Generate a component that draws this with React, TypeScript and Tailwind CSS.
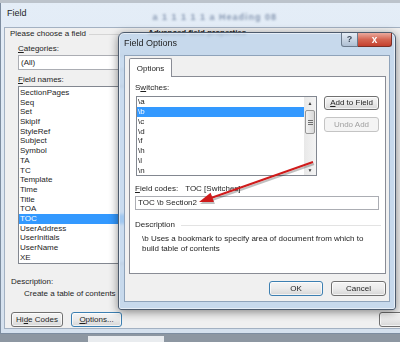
import React from 'react';

const fieldNames = [
  'SectionPages',
  'Seq',
  'Set',
  'SkipIf',
  'StyleRef',
  'Subject',
  'Symbol',
  'TA',
  'TC',
  'Template',
  'Time',
  'Title',
  'TOA',
  'TOC',
  'UserAddress',
  'UserInitials',
  'UserName',
  'XE',
];

const switches = ['\\a', '\\b', '\\c', '\\d', '\\f', '\\h', '\\l', '\\n'];

const btn =
  'flex items-center justify-center rounded-[3px] border bg-linear-to-b from-[#f4f4f4] via-[#ebebeb] to-[#d6d6d6] shadow-[inset_0_0_0_1px_rgba(255,255,255,0.7)]';

const App = () => {
  return (
    <div className="relative flex h-[342px] w-[400px] flex-col overflow-hidden bg-[#8d97a2] font-['Liberation_Sans',Arial,sans-serif] text-[8px] leading-[10px] text-[#1e1e1e]">
      <div className="h-[3px] bg-[#bcc3cb]" />

      {/* Field dialog (behind) */}
      <div className="flex h-[331px] w-[432px] flex-col border-l border-b border-[#7d8da0] bg-linear-to-b from-[#e4edf7] to-[#d5e1ee] pl-[3px]">
        <div className="flex h-[24px] items-start">
          <span className="pt-[5px] pl-[3px] text-[9px]">Field</span>
          <span className="mt-[9px] ml-[126px] text-[9px] font-bold tracking-[1px] text-[#8798b2] blur-[0.8px]">
            a 1 1 1 1 1 a Heading 08
          </span>
        </div>
        <div className="flex h-[302px] w-[428px] flex-col border border-[#a3b1c2] bg-[#f0f0f0]">
          <div className="flex">
            <div className="flex w-[143px] flex-col">
              <div className="mt-[1px] flex items-center pl-[5px]">
                <span>Please choose a field</span>
                <div className="mr-[4px] ml-[3px] h-px flex-1 bg-[#d5d5d5]" />
              </div>
              <div className="mt-[5px] pl-[13px]">
                <u>C</u>ategories:
              </div>
              <div className="mt-[1px] ml-[13px] flex h-[15px] w-[130px] items-center border border-[#abadb3] bg-white pl-[2px]">
                (All)
              </div>
              <div className="mt-[5px] pl-[13px]">
                <u>F</u>ield names:
              </div>
              <div className="mt-[1px] ml-[13px] flex h-[178px] w-[130px] flex-col border border-[#828790] bg-white pt-[1px]">
                {fieldNames.map((n) => (
                  <div
                    key={n}
                    className={
                      n === 'TOC'
                        ? 'h-[9.7px] bg-[#3399ff] pl-[1px] leading-[9.7px] text-white'
                        : 'h-[9.7px] pl-[1px] leading-[9.7px]'
                    }
                  >
                    {n}
                  </div>
                ))}
              </div>
              <div className="mt-[13px] pl-[6px]">Description:</div>
              <div className="mt-[2px] pl-[19px] whitespace-nowrap">Create a table of contents</div>
            </div>
            <div className="flex flex-col">
              <div className="font-bold">Advanced field properties</div>
            </div>
          </div>
          <div className="mt-[13px] flex pl-[6px]">
            <div className={`${btn} h-[15px] w-[55px] border-[#707070]`}>
              Hi<u>d</u>e Codes
            </div>
            <div
              className={`${btn} ml-[8px] h-[15px] w-[54px] border-[#3c7fb1] shadow-[inset_0_0_0_1px_#a9def5]`}
            >
              <u>O</u>ptions...
            </div>
            <div className={`${btn} ml-[257px] h-[15px] w-[55px] border-[#707070]`} />
          </div>
        </div>
      </div>
      <div className="flex flex-1">
        <div className="ml-[88px] h-[6px] w-[76px] self-end bg-[#e9ecef]" />
      </div>

      {/* Field Options dialog */}
      <div className="absolute top-[32px] left-[118px] flex h-[278px] w-[278px] flex-col rounded-t-[6px] rounded-b-[3px] border border-[#4d5b6d] bg-[#bdd3eb]/80 shadow-[0_2px_10px_rgba(0,0,0,0.45),inset_0_0_0_1px_rgba(255,255,255,0.55)] backdrop-blur-[1.5px]">
        <div className="relative h-[22px]">
          <span className="block pt-[5px] pl-[5px] text-[9px]">Field Options</span>
          <div className="absolute top-0 right-[3px] flex">
            <div className="flex h-[14px] w-[17px] items-center justify-center rounded-bl-[3px] border border-t-0 border-[#6b7a8c] bg-linear-to-b from-[#e6edf5] to-[#aebfd3] text-[9px] leading-none font-bold text-[#3d4a5a]">
              ?
            </div>
            <div className="flex h-[14px] w-[34px] items-center justify-center rounded-br-[3px] border border-t-0 border-l-0 border-[#7b3027] bg-linear-to-b from-[#eaa99d] via-[#d46552] to-[#c4402e] text-[10px] leading-none font-bold text-white">
              x
            </div>
          </div>
        </div>
        <div className="ml-[5px] flex h-[247px] w-[266px] flex-col border border-[#8fa3ba] bg-[#f0f0f0] pt-[2px] pl-[4px]">
          <div className="relative z-10 flex h-[19px] w-[43px] justify-center rounded-t-[2px] border border-b-0 border-[#898c95] bg-white pt-[5px]">
            Options
          </div>
          <div className="-mt-[1px] flex h-[198px] w-[257px] flex-col border border-[#898c95] bg-white">
            <div className="mt-[6px] pl-[5px]">
              S<u>w</u>itches:
            </div>
            <div className="mt-[3px] flex">
              <div className="ml-[6px] flex h-[80px] w-[181px] border border-[#828790] bg-white">
                <div className="flex flex-1 flex-col">
                  {switches.map((s) => (
                    <div
                      key={s}
                      className={
                        s === '\\b'
                          ? 'h-[9.85px] bg-[#3399ff] pl-[1px] leading-[9.85px] text-white'
                          : 'h-[9.85px] pl-[1px] leading-[9.85px]'
                      }
                    >
                      {s}
                    </div>
                  ))}
                </div>
                <div className="flex w-[12px] flex-col bg-linear-to-r from-[#e8e8e8] to-[#f4f4f4]">
                  <div className="flex h-[11px] items-center justify-center text-[5px] text-[#3b3b3b]">▲</div>
                  <div className="mx-[1px] mt-[2px] flex h-[24px] flex-col items-center justify-center gap-[1px] rounded-[2px] border border-[#979797] bg-linear-to-r from-[#f2f2f2] to-[#d9d9d9]">
                    <div className="h-px w-[5px] bg-[#6f6f6f]" />
                    <div className="h-px w-[5px] bg-[#6f6f6f]" />
                    <div className="h-px w-[5px] bg-[#6f6f6f]" />
                  </div>
                  <div className="flex-1" />
                  <div className="flex h-[11px] items-center justify-center text-[5px] text-[#3b3b3b]">▼</div>
                </div>
              </div>
              <div className="ml-[7px] flex flex-col">
                <div className={`${btn} h-[14px] w-[55px] border-[#707070]`}>
                  <u>A</u>dd to Field
                </div>
                <div className="mt-[7px] flex h-[15px] w-[55px] items-center justify-center rounded-[3px] border border-[#c4c4c4] bg-[#f4f4f4] text-[#a0a0a0]">
                  Undo Add
                </div>
              </div>
            </div>
            <div className="mt-[8px] flex pl-[5px]">
              <span>
                <u>F</u>ield codes:
              </span>
              <span className="ml-[7px]">TOC [Switches]</span>
            </div>
            <div className="mt-[2px] ml-[5px] flex h-[14px] w-[244px] items-center border border-[#abadb3] bg-white pl-[2px]">
              TOC \b Section2
            </div>
            <div className="mt-[10px] flex items-center pl-[5px]">
              <span>Description</span>
              <div className="mr-[4px] ml-[6px] h-px flex-1 bg-[#e3e3e3]" />
            </div>
            <div className="mt-[4px] pl-[12px]">
              <div>\b Uses a bookmark to specify area of document from which to</div>
              <div>build table of contents</div>
            </div>
          </div>
          <div className="mt-[7px] flex justify-end gap-[8px] pr-[3px]">
            <div
              className={`${btn} h-[15px] w-[54px] border-[#3c7fb1] shadow-[inset_0_0_0_1px_#a9def5]`}
            >
              OK
            </div>
            <div className={`${btn} h-[15px] w-[55px] border-[#707070]`}>Cancel</div>
          </div>
        </div>
      </div>

      {/* red annotation arrow */}
      <svg className="pointer-events-none absolute inset-0" width="400" height="342" viewBox="0 0 400 342">
        <line x1="314" y1="164" x2="212" y2="200" stroke="#000" strokeOpacity="0.25" strokeWidth="2" />
        <polygon points="200,204 211.6,194.7 214.9,204.1" fill="#000" fillOpacity="0.25" />
        <line x1="313" y1="162" x2="211" y2="198" stroke="#cf1b1b" strokeWidth="2" />
        <polygon points="199,202 210.6,192.7 213.9,202.1" fill="#cf1b1b" />
      </svg>
    </div>
  );
};

export default App;
